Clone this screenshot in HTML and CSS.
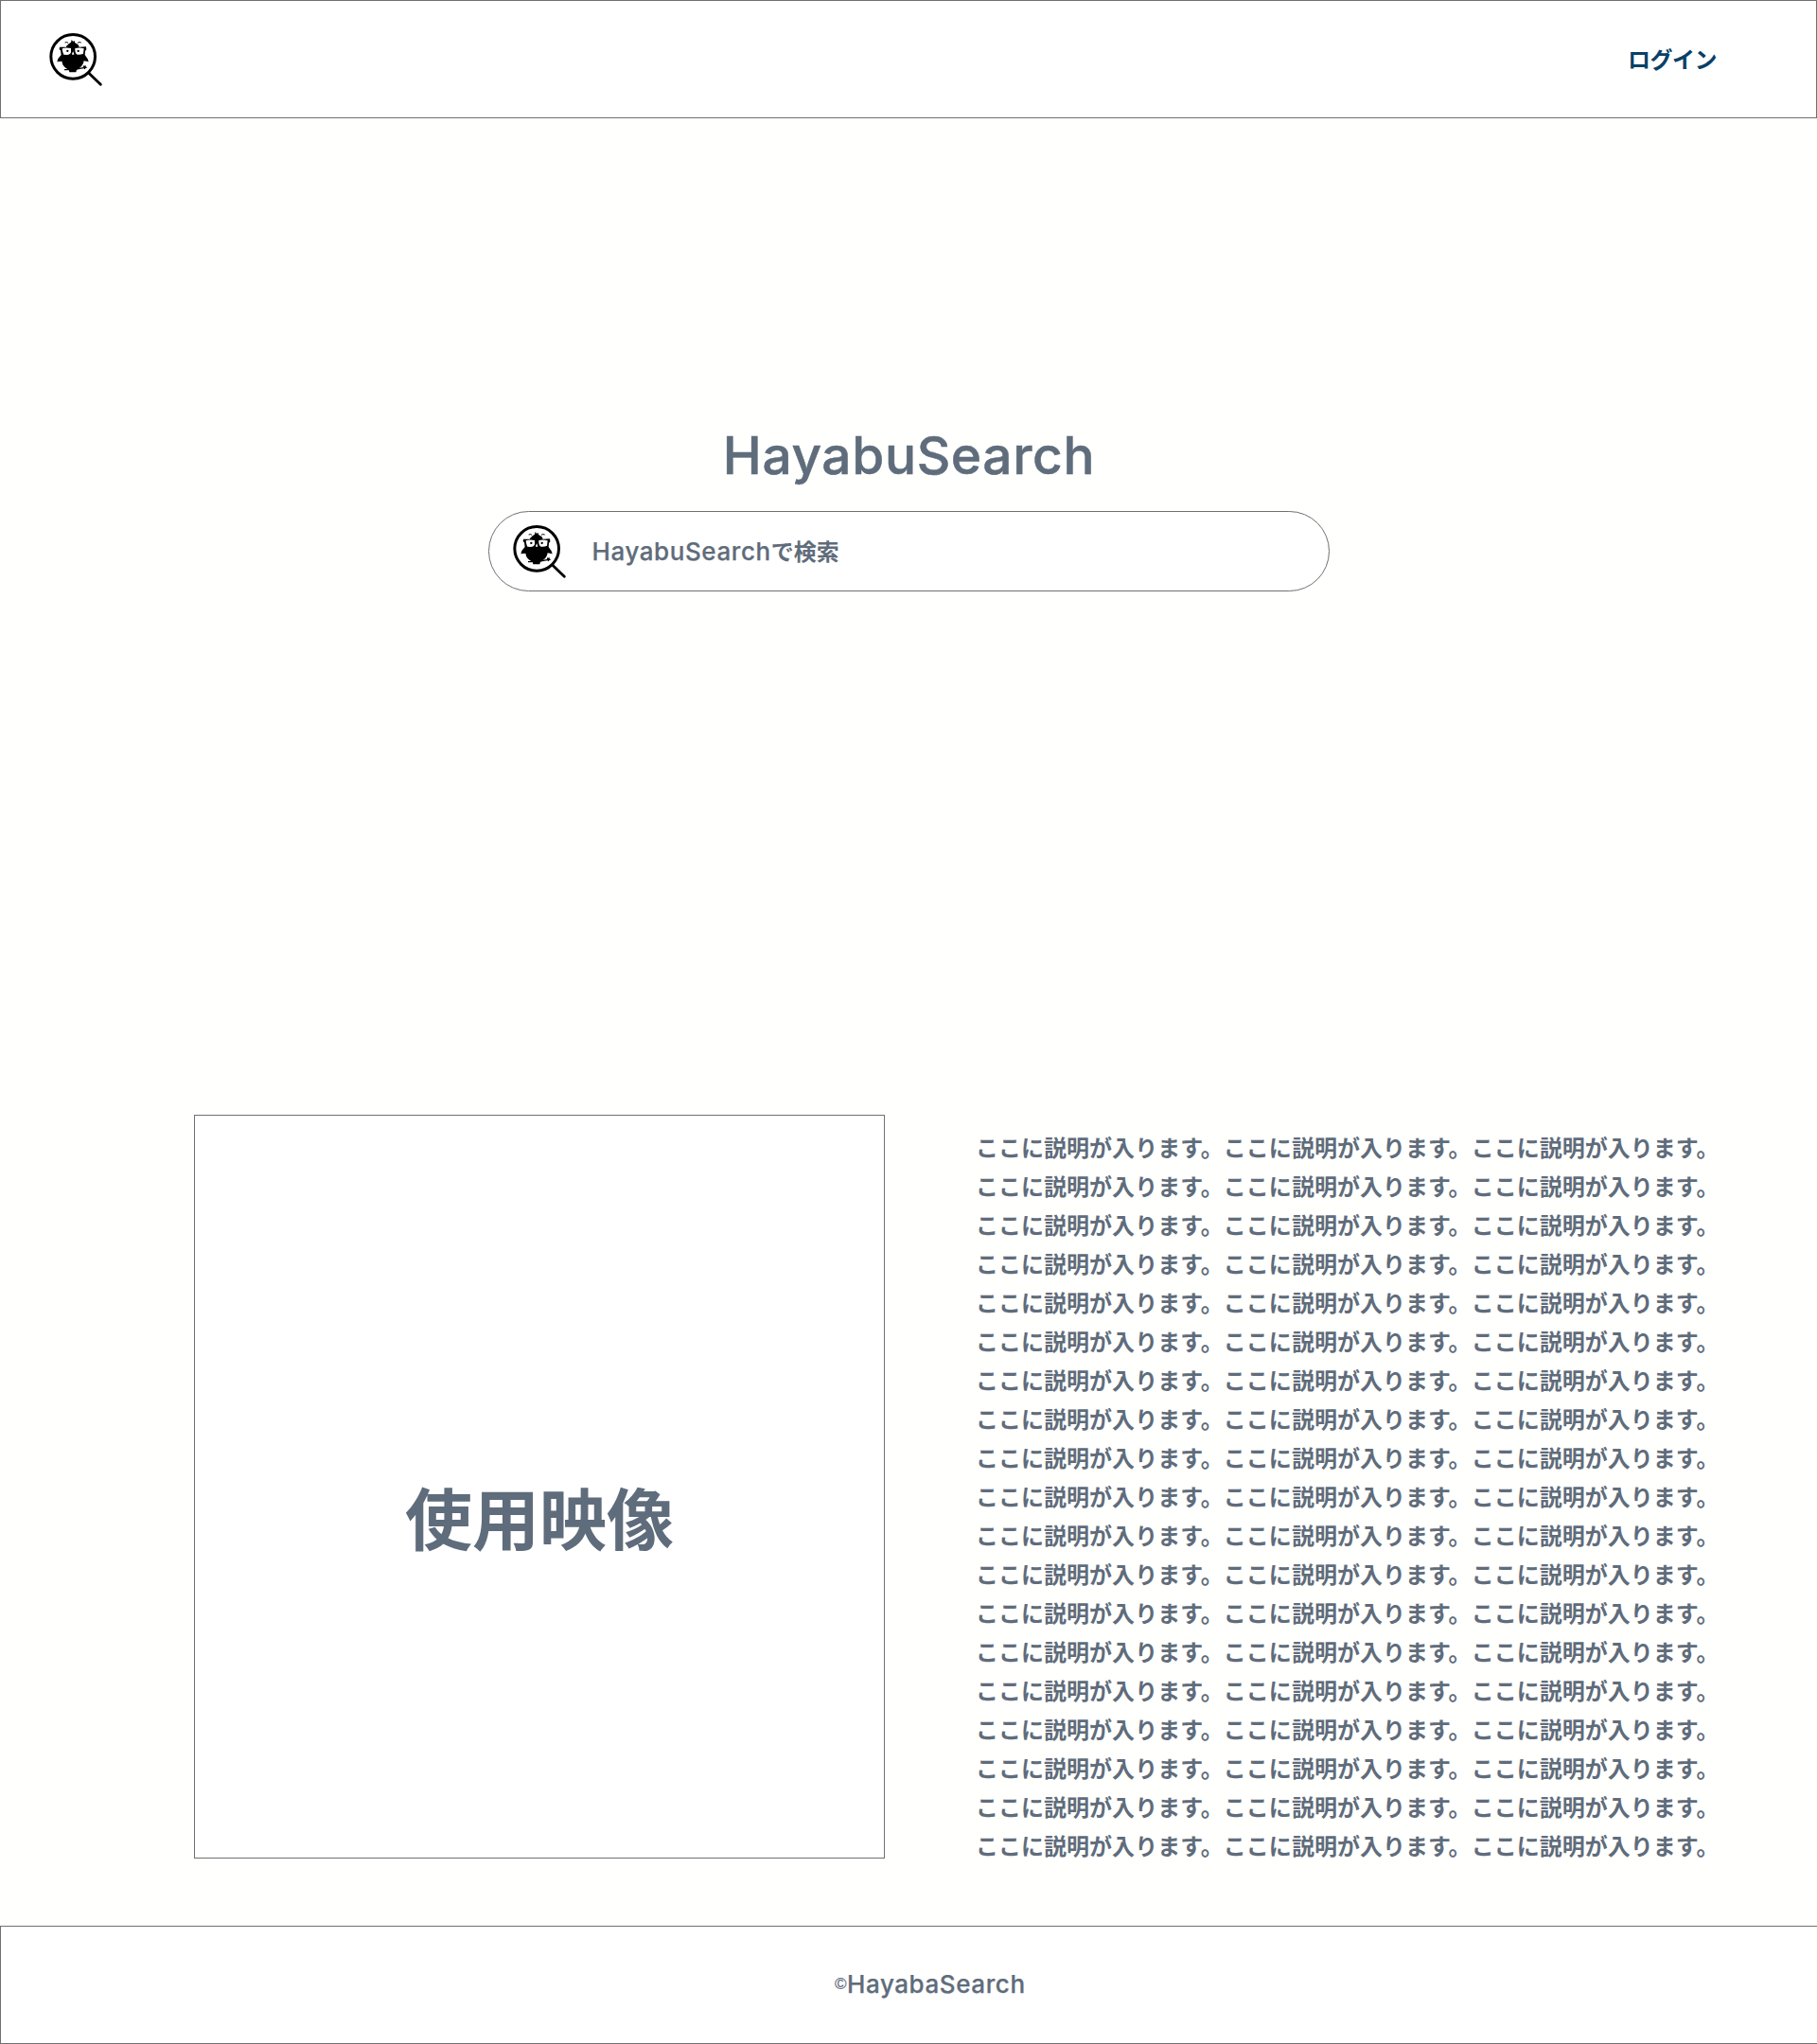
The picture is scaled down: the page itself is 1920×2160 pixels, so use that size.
FILE: index.html
```html
<!DOCTYPE html>
<html lang="ja">
<head>
<meta charset="utf-8">
<title>HayabuSearch</title>
<link rel="stylesheet" href="styles.css">
</head>
<body>
<svg class="defs" aria-hidden="true">
  <symbol id="logo" viewBox="150 99 180 180">
    <circle cx="231.500" cy="179.500" r="70" fill="none" stroke="#000" stroke-width="9"/>
    <path d="M281 231 L319 268" stroke="#000" stroke-width="8.500" stroke-linecap="round"/>
    <path d="M206 135 q6-3 10 1 M246 136 q5-4 11-1" fill="none" stroke="#000" stroke-width="3"/>
    <path d="M210 147 L218 139 L225 134 L227 126 L231 131 L237 130 L237 135 L248 142 L251 149 L273 148 L274 157 L270 162 L269 174 L278 187 L281 196 L266 193 Q264 211 243 221 L241 229 L220 229 L218 221 Q198 212 196 194 L181 196 L184 186 L194 174 L192 160 L188 157 L189 149 L210 149Z"/>
    <path d="M197 154 Q209 149 225 153 L225 166 Q222 174 212 174 L202 173 Q198 166 197 154Z M238 153 Q253 149 266 154 L264 170 Q256 174 245 173 Q239 171 238 160Z M229 168 L232 163 L235 173 L228 173Z" fill="#fff"/>
    <circle cx="214" cy="161.500" r="3.500"/><circle cx="248" cy="161.500" r="3.500"/>
    <path d="M204 221 Q238 222 269 214 M264 210 L275 214 M268 219 L271 208" fill="none" stroke="#000" stroke-width="4"/>
  </symbol>
</svg>
<header class="header">
  <a class="brand" href="#"><svg class="logo"><use href="#logo"/></svg></a>
  <a class="login" href="#">ログイン</a>
</header>
<main class="main">
  <section class="hero">
    <h1 class="title">HayabuSearch</h1>
    <div class="search">
      <svg class="logo"><use href="#logo"/></svg>
      <span class="placeholder"><span class="latin">HayabuSearch</span>で検索</span>
    </div>
  </section>
  <section class="about">
    <div class="media">使用映像</div>
    <div class="description">
      <p>ここに説明が入ります。ここに説明が入ります。ここに説明が入ります。</p>
      <p>ここに説明が入ります。ここに説明が入ります。ここに説明が入ります。</p>
      <p>ここに説明が入ります。ここに説明が入ります。ここに説明が入ります。</p>
      <p>ここに説明が入ります。ここに説明が入ります。ここに説明が入ります。</p>
      <p>ここに説明が入ります。ここに説明が入ります。ここに説明が入ります。</p>
      <p>ここに説明が入ります。ここに説明が入ります。ここに説明が入ります。</p>
      <p>ここに説明が入ります。ここに説明が入ります。ここに説明が入ります。</p>
      <p>ここに説明が入ります。ここに説明が入ります。ここに説明が入ります。</p>
      <p>ここに説明が入ります。ここに説明が入ります。ここに説明が入ります。</p>
      <p>ここに説明が入ります。ここに説明が入ります。ここに説明が入ります。</p>
      <p>ここに説明が入ります。ここに説明が入ります。ここに説明が入ります。</p>
      <p>ここに説明が入ります。ここに説明が入ります。ここに説明が入ります。</p>
      <p>ここに説明が入ります。ここに説明が入ります。ここに説明が入ります。</p>
      <p>ここに説明が入ります。ここに説明が入ります。ここに説明が入ります。</p>
      <p>ここに説明が入ります。ここに説明が入ります。ここに説明が入ります。</p>
      <p>ここに説明が入ります。ここに説明が入ります。ここに説明が入ります。</p>
      <p>ここに説明が入ります。ここに説明が入ります。ここに説明が入ります。</p>
      <p>ここに説明が入ります。ここに説明が入ります。ここに説明が入ります。</p>
      <p>ここに説明が入ります。ここに説明が入ります。ここに説明が入ります。</p>
    </div>
  </section>
</main>
<footer class="footer"><span class="mark">©</span><span class="latin">HayabaSearch</span></footer>
</body>
</html>
```
FILE: styles.css
```css
* { box-sizing: border-box; }
body {
  margin: 0;
  height: 2160px;
  display: flex;
  flex-direction: column;
  overflow: hidden;
  background: #fffffe;
  color: #5f6c7b;
  font-family: "Noto Sans CJK JP", sans-serif;
  font-weight: 700;
  font-size: 24px;
}
.defs { display: none; }
.header {
  height: 125px;
  flex: none;
  display: flex;
  justify-content: space-between;
  align-items: flex-start;
  padding: 32px 105px 0 49px;
  background: #fff;
  border: 1px solid #707070;
}
.brand { display: block; height: 60px; }
.logo { display: block; width: 60px; height: 60px; flex: none; }
.login {
  margin-top: 11px;
  line-height: 36px;
  color: #094067;
  text-decoration: none;
  letter-spacing: -0.5px;
}
.main { flex: 1; }
.hero {
  height: 1053px;
  padding-top: 314px;
  display: flex;
  flex-direction: column;
  align-items: center;
}
.title {
  margin: 0;
  height: 101px;
  line-height: 84px;
  font-family: Inter, sans-serif;
  font-weight: 500;
  font-size: 55px;
  letter-spacing: 0.65px;
  padding-left: 1px;
  -webkit-text-stroke: 0.5px currentColor;
  white-space: nowrap;
}
.latin {
  font-family: Inter, sans-serif;
  font-weight: 500;
  font-size: 26px;
  letter-spacing: 0.58px;
  -webkit-text-stroke: 0.25px currentColor;
}
.search {
  width: 889px;
  height: 85px;
  display: flex;
  padding: 12px 23px;
  background: #fff;
  border: 1px solid #707070;
  border-radius: 43px;
}
.placeholder { margin-left: 26px; line-height: 58px; white-space: nowrap; }
.about { display: flex; padding-left: 205px; }
.media {
  width: 730px;
  height: 786px;
  display: flex;
  justify-content: center;
  padding-top: 369px;
  background: #fff;
  border: 1px solid #707070;
  font-size: 71px;
  line-height: 106px;
}
.description { margin: 13px 0 0 96px; }
.description p {
  margin: 0;
  line-height: 41px;
  letter-spacing: 0.02px;
  white-space: nowrap;
}
.footer {
  height: 125px;
  flex: none;
  display: flex;
  align-items: center;
  padding: 0 0 2px 881px;
  background: #fff;
  border: 1px solid #707070;
  border-right: 0;
}
.mark {
  width: 13px;
  font-family: "Liberation Sans", sans-serif;
  font-weight: 400;
  font-size: 17px;
  -webkit-text-stroke: 0.2px currentColor;
}
```
